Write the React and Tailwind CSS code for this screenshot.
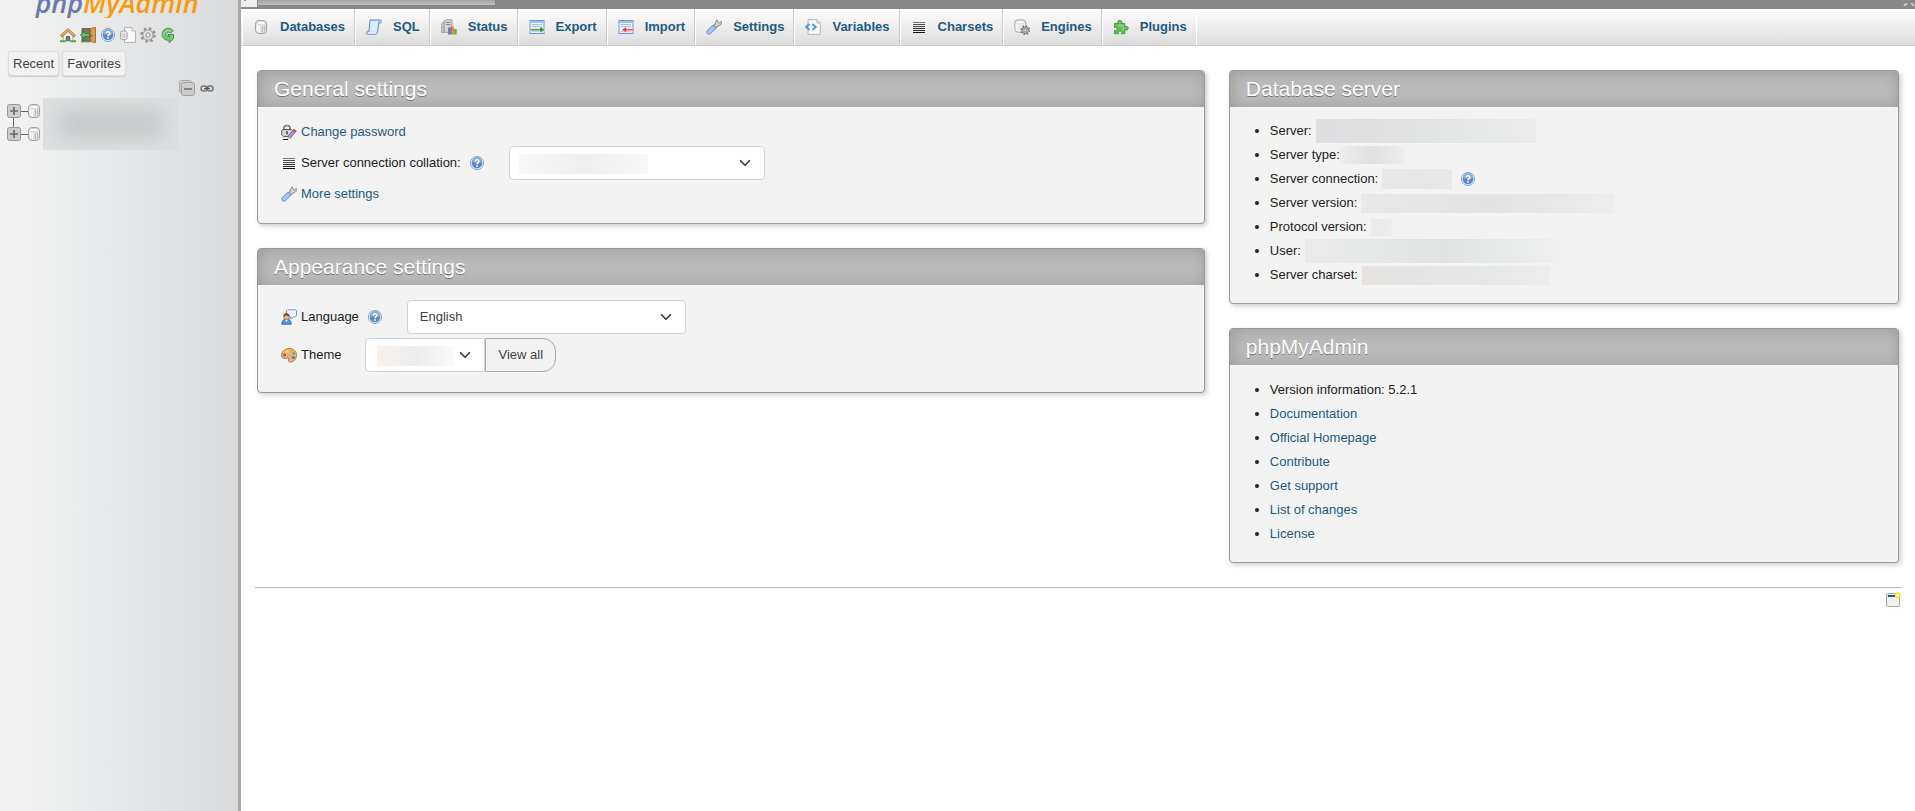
import React from "react";

function Svg({ children, className = "h-4 w-4", box = "0 0 16 16" }) {
  return (
    <svg viewBox={box} className={`${className} shrink-0`} fill="none" aria-hidden="true">
      {children}
    </svg>
  );
}

const HomeIcon = () => (
  <Svg>
    <path d="M3 8.500 8 4l5 4.500V14H3z" fill="#f4f4f2" stroke="#8b8b86" strokeWidth=".8" />
    <path d="M1 9.500 8 3l7 6.500" stroke="#a8692b" strokeWidth="2.800" strokeLinejoin="round" />
    <path d="M1.300 9.200 8 3l6.700 6.200" stroke="#e6b67c" strokeWidth="1.300" />
    <path d="M6.200 14V9.500h3.600V14" fill="#777" stroke="#555" strokeWidth=".8" />
    <path d="M0 14.300h5.500M10.500 14.300H16" stroke="#4cae3c" strokeWidth="2" />
  </Svg>
);

const ExitIcon = () => (
  <Svg>
    <path d="M2 1.500h8.500v13H2z" fill="#7a6a52" stroke="#6b5434" strokeWidth=".8" />
    <path d="M10.500 1.500 15.500.5v15l-5-1z" fill="#d79b55" stroke="#a8692b" strokeWidth=".9" />
    <path d="M11.800 8v1.500" stroke="#6b4318" />
    <path d="M3.500 3h6v10h-6z" fill="#777772" />
    <path d="M.3 8l4.500-3.800v2.300H9.500v3H4.800v2.300z" fill="#6fc063" stroke="#2e7d2c" strokeWidth=".8" />
    <path d="M1 14.800h9" stroke="#4cae3c" strokeWidth="1.200" />
  </Svg>
);

const HelpIcon = () => (
  <Svg>
    <circle cx="8" cy="8" r="6.600" fill="#e6eef8" stroke="#86a6cf" />
    <circle cx="8" cy="8" r="5.300" fill="#5c88c0" />
    <path d="M3 7a5 5 0 0 1 10 0c-3 1.200-7 1.200-10 0z" fill="#86a9d6" />
    <path d="M6.200 6.500c0-2.300 3.700-2.300 3.700-.1 0 1.300-1.900 1.300-1.900 2.800" stroke="#fff" strokeWidth="1.500" />
    <path d="M7.200 10.300h1.600v1.500H7.200z" fill="#fff" />
  </Svg>
);

const DatabaseIcon = () => (
  <Svg>
    <rect x="2.500" y="1.500" width="11" height="13" rx="3.500" fill="#e6e6e6" stroke="#a2a2a2" />
    <ellipse cx="8" cy="4" rx="4.300" ry="1.700" fill="#fff" stroke="#c4c4c4" strokeWidth=".6" />
    <path d="M4.500 6.500v6M6.500 7v6.500" stroke="#fff" strokeWidth="1.300" />
    <path d="M9.300 7v6.500M11.500 6.500v6" stroke="#bcbcbc" strokeWidth="1.300" />
  </Svg>
);

const DocsIcon = () => (
  <Svg>
    <path d="M4.500.6h7.500l3.400 3.400v11.400H4.500z" fill="#fbfbfb" stroke="#b0b0b0" />
    <path d="M12 .6V4h3.400" fill="#e5e5e5" stroke="#b0b0b0" strokeWidth=".8" />
    <rect x=".6" y="4" width="6.500" height="8.500" rx="2" fill="#ececec" stroke="#a2a2a2" />
    <path d="M3 6.500V11M4.800 6.500V11" stroke="#bdbdbd" />
  </Svg>
);

const GearIcon = () => (
  <Svg>
    <circle cx="8" cy="8" r="6.500" stroke="#979797" strokeWidth="2.600" strokeDasharray="2.550 2.550" />
    <circle cx="8" cy="8" r="5.300" fill="#cdcdcd" stroke="#979797" strokeWidth=".9" />
    <circle cx="8" cy="8" r="3.700" stroke="#e8e8e8" strokeWidth=".9" />
    <circle cx="8" cy="8" r="2" fill="#f3f3f3" stroke="#979797" />
  </Svg>
);

const ReloadIcon = () => (
  <Svg>
    <path
      d="M13 3.700A6 6 0 1 0 7.500 13.200h1.700V15.800L13.500 11.800V7.500H7.500L9.700 9.700C6.500 10.300 5.300 8.200 6 6.600 7 4.700 9.500 4.600 10.800 6z"
      fill="#7cc77c"
      stroke="#35893c"
      strokeWidth=".9"
      strokeLinejoin="round"
    />
    <path d="M3.200 8.500c-.3-4 4.300-6 7.800-4.200" stroke="#a9dea6" strokeWidth=".9" />
  </Svg>
);

const SqlIcon = () => (
  <Svg>
    <path d="M4 1h10.500c1.300 0 1.300 3 0 3H13l-1.500 8.500c-.2 1.800-1 2.700-2.200 2.700H1.500c-1.300 0-1.300-2.700 0-2.700H3z" fill="#cfe3fa" stroke="#5a8cc8" />
    <path d="M4.800 2.500h7.200L10.500 12.500H4z" fill="#dcebfd" />
    <path d="M2 14h7.500" stroke="#fff" />
    <path d="M13 1.500v2.500" stroke="#5a8cc8" strokeWidth=".8" />
  </Svg>
);

const StatusIcon = () => (
  <Svg>
    <path d="M3 2.500 5 .8h6v12.500H3z" fill="#d6d6d6" stroke="#999" strokeWidth=".9" />
    <path d="M.6 4.500 3 2.500v11H.6z" fill="#c6c6c6" stroke="#999" strokeWidth=".7" />
    <path d="M5 3.500h4.500M5 5.500h4.500" stroke="#8a8a8a" />
    <path d="M7 8.500h3V15.500H7z" fill="#4a8be0" />
    <path d="M10 7.500h3v8h-3z" fill="#f08b3e" />
    <path d="M9.800 7.500h1V15.500h-1z" fill="#e04a3c" />
    <path d="M13 10h2.700v5.500H13z" fill="#5cb84c" />
  </Svg>
);

const SheetIcon = ({ color, flip }) => (
  <Svg>
    <rect x="1" y="1.500" width="14" height="13" fill="#eef5fd" stroke="#6c97cf" />
    <path d="M2 3h12" stroke="#86aee0" strokeWidth="1.500" />
    <path d="M3 5.500h10M3 7.500h10M3 12.700h10" stroke="#9dbde4" />
    <path d="M5.500 5v8M10.500 5v8" stroke="#c9dcf2" strokeWidth=".7" />
    {flip ? (
      <path d="M16 9.800H8.500V7.500L3.500 10.800 8.500 14v-2.200H16z" fill={color} stroke="#fff" strokeWidth=".5" />
    ) : (
      <path d="M1 9.800h10V7.500l5 3.300-5 3.200v-2.200H1z" fill={color} stroke="#fff" strokeWidth=".5" />
    )}
  </Svg>
);

const WrenchIcon = () => (
  <Svg>
    <path d="M8 8.500 12 4.500" stroke="#8a8a8a" strokeWidth="4" />
    <path d="M11 .7 9.200 3.500l.5 2.700 2.600.9 2.900-1.800.2-3.100-1.700 1.600-1.800-.4-.3-1.600z" fill="#d3d3d3" stroke="#8a8a8a" strokeWidth=".9" />
    <path d="M8 8.500 11.500 5" stroke="#d3d3d3" strokeWidth="2.200" />
    <path d="M3 13 7.300 8.700" stroke="#6a8ccc" strokeWidth="5" strokeLinecap="round" />
    <path d="M3 13 7.300 8.700" stroke="#a9c6f3" strokeWidth="3.400" strokeLinecap="round" />
  </Svg>
);

const VariablesIcon = () => (
  <Svg>
    <path d="M3 .6h9l3.300 3.300v11.500H3z" fill="#f8f8f8" stroke="#b5b5b5" />
    <path d="M12 .6V4h3.300" fill="#e2e2e2" stroke="#b5b5b5" strokeWidth=".8" />
    <path d="M4.500 5 1.200 8l3.300 3M7.500 5l3.300 3-3.300 3" stroke="#4a9be8" strokeWidth="1.900" />
  </Svg>
);

const CharsetsIcon = () => (
  <Svg>
    <path d="M2 3.500h12" stroke="#777" />
    <path d="M2 5.500h12M2 7.500h12" stroke="#4a4a4a" />
    <path d="M2 9.500h12M2 11.500h12" stroke="#2a2a2a" />
    <path d="M2 13.500h12" stroke="#111" />
  </Svg>
);

const EnginesIcon = () => (
  <Svg>
    <rect x=".8" y=".8" width="11" height="12.500" rx="3.300" fill="#ececec" stroke="#aaa" />
    <ellipse cx="6.300" cy="3.300" rx="4.200" ry="1.600" fill="#fff" stroke="#c6c6c6" strokeWidth=".6" />
    <path d="M3 6v5.500" stroke="#fff" strokeWidth="1.300" />
    <circle cx="11.200" cy="11.200" r="4" stroke="#707070" strokeWidth="1.800" strokeDasharray="1.570 1.570" />
    <circle cx="11.200" cy="11.200" r="3.200" fill="#b9b9b9" stroke="#707070" strokeWidth=".8" />
    <circle cx="11.200" cy="11.200" r="1.200" fill="#fff" stroke="#707070" strokeWidth=".7" />
  </Svg>
);

const PluginsIcon = () => (
  <Svg>
    <path
      d="M1.500 4.500h3.800C4 2.500 5.200 1.200 6.800 1.200S9.500 2.500 8.300 4.500h3.500v3.300c2-1.200 3.400-.2 3.400 1.400s-1.400 2.500-3.400 1.300v4.300H8.500c.9-2-.2-2.800-1.500-2.800s-2.400.8-1.500 2.800h-4v-3.500c1.700.9 2.600 0 2.600-1.300S3.200 7.500 1.500 8.500z"
      fill="#6cbd5f"
      stroke="#3f9440"
      strokeWidth=".9"
    />
    <path d="M5 6.500h5v5" stroke="#93d488" strokeWidth="1.300" />
  </Svg>
);

const PasswordIcon = () => (
  <Svg>
    <path d="M3 5.500V4.500c0-4 6-4 6 0v1" stroke="#5b5b66" strokeWidth="1.700" />
    <path d="M3.200 4.800c0-4 5.700-4 5.700 0" stroke="#c9c9d6" strokeWidth=".7" />
    <path d="M1.800 5.500h8.500l1 1v4.500l-1.500 1.500h-7.500L.7 11V6.500z" fill="#c3c3d0" stroke="#5d5d69" />
    <path d="M1 7.800h10M1 10h10" stroke="#efeff6" strokeWidth=".9" />
    <path d="M5.300 7.300h1.400v3H5.300z" fill="#333" />
    <path d="M8 13.500 13 7.500" stroke="#4a4590" strokeWidth="3.400" />
    <path d="M8 13.500 13 7.500" stroke="#a3a0ea" strokeWidth="2" />
    <path d="M13 7.500l1.300-1.600" stroke="#e0402c" strokeWidth="3.600" />
    <path d="M6.300 15.500l.3-3 2.500 1.800z" fill="#e9b93c" />
    <path d="M2 15.500h5" stroke="#111" />
  </Svg>
);

const LanguageIcon = () => (
  <Svg>
    <path d="M6.500.8h8l1 1v5l-1 1h-2L9.500 10V7.800h-3l-1-1v-5z" fill="#eef5ff" stroke="#6d9bd6" />
    <path d="M.8 15.300c0-4 1.700-5 4.700-5s4.700 1 4.700 5z" fill="#4d95e6" stroke="#2c68b4" strokeWidth=".8" />
    <path d="M3.800 10.500 5.500 13l1.700-2.500z" fill="#fff" />
    <circle cx="5.500" cy="7.500" r="2.900" fill="#f0bd8d" stroke="#9a5a2b" strokeWidth=".7" />
    <path d="M2.500 7.500c-.3-4 6-4.300 6-.3-2 0-3-.3-3.600-1C4.500 7 3.500 7.500 2.500 7.500z" fill="#8a4b20" />
  </Svg>
);

const ThemeIcon = () => (
  <Svg>
    <path
      d="M8.500 1.500c4 0 7 2.700 7 6.500s-2.500 7-6 7c-2 0-2.200-1-2-2.200.2-1.400-.4-2-1.700-1.600C3 12.200.5 11.300.5 8.500c0-4 3.800-7 8-7z"
      fill="#ecb57e"
      stroke="#b06f35"
      strokeWidth=".9"
    />
    <circle cx="3.600" cy="8" r="1.500" fill="#e23b31" />
    <circle cx="6" cy="4.500" r="1.400" fill="#f0e04a" />
    <circle cx="10" cy="4" r="1.400" fill="#f7a63a" />
    <circle cx="12.800" cy="6.600" r="1.400" fill="#57b947" />
    <circle cx="12.300" cy="10.500" r="1.500" fill="#3d7bdc" />
    <circle cx="8.200" cy="9.500" r="1.200" fill="#f3f3f3" stroke="#9a6a3a" strokeWidth=".6" />
  </Svg>
);

const CollapseIcon = () => (
  <Svg>
    <rect x=".5" y=".5" width="12" height="12" rx="2" fill="#d0d0d0" stroke="#a8a8a8" />
    <rect x="2.500" y="2.500" width="13" height="13" rx="2" fill="#cdcdcd" stroke="#a0a0a0" />
    <path d="M5 9h8" stroke="#6a6a6a" strokeWidth="1.500" />
  </Svg>
);

const LinkIcon = () => (
  <Svg>
    <rect x="2" y="6" width="6" height="5" rx="2.500" stroke="#777" strokeWidth="1.500" />
    <rect x="8" y="6" width="6" height="5" rx="2.500" stroke="#777" strokeWidth="1.500" />
    <path d="M5 8.500h6" stroke="#555" strokeWidth="1.500" />
  </Svg>
);

const ExpandIcon = () => (
  <Svg className="h-[14px] w-[14px]" box="0 0 14 14">
    <rect x=".5" y=".5" width="13" height="13" rx="2" fill="#cdcdcd" stroke="#999" />
    <path d="M3 7h8M7 3v8" stroke="#6a6a6a" strokeWidth="1.600" />
  </Svg>
);

const WindowIcon = () => (
  <Svg>
    <rect x="1.500" y="1.500" width="13" height="13" rx="1" fill="#ededed" stroke="#aaaaa2" />
    <path d="M3 6h10v7H3z" fill="#f1f1f1" />
    <path d="M3 4h8" stroke="#23539c" strokeWidth="2" />
    <circle cx="12.800" cy="3.300" r="2.200" fill="#fffde0" stroke="#f2e92b" strokeWidth="1.500" />
  </Svg>
);

const Chevron = () => (
  <Svg className="pointer-events-none absolute right-[14px] top-[11px] h-3 w-3" box="0 0 16 16">
    <path d="M2 5l6 6 6-6" stroke="#343a40" strokeWidth="2.200" strokeLinecap="round" strokeLinejoin="round" />
  </Svg>
);

const tabs = [
  ["Databases", <DatabaseIcon />],
  ["SQL", <SqlIcon />],
  ["Status", <StatusIcon />],
  ["Export", <SheetIcon color="#3a8f35" />],
  ["Import", <SheetIcon color="#e8443c" flip />],
  ["Settings", <WrenchIcon />],
  ["Variables", <VariablesIcon />],
  ["Charsets", <CharsetsIcon />],
  ["Engines", <EnginesIcon />],
  ["Plugins", <PluginsIcon />],
];

const shortcuts = [
  ["Home", <HomeIcon />],
  ["Log out", <ExitIcon />],
  ["phpMyAdmin documentation", <HelpIcon />],
  ["Server documentation", <DocsIcon />],
  ["Navigation panel settings", <GearIcon />],
  ["Reload navigation panel", <ReloadIcon />],
];

const serverInfo = [
  ["Server:", "ml-1 h-6 w-[220px] from-[#dfdddf] via-[#e2e3e3] to-[#ececec]"],
  ["Server type:", "h-[18px] w-[65px] from-[#efefef] via-[#e0e0e0] to-[#efefef]"],
  ["Server connection:", "ml-1 h-5 w-[70px] from-[#e8e8e7] via-[#e5e6e6] to-[#e8eaea]"],
  ["Server version:", "ml-1 h-[19px] w-[254px] from-[#e9e9e9] via-[#e2e2e2] to-[#eeeeee]"],
  ["Protocol version:", "ml-1 h-[17px] w-[21px] from-[#ebebea] via-[#ebebeb] to-[#eeeeee]"],
  ["User:", "ml-1 h-6 w-[284px] from-[#ebebeb] via-[#e1e2e2] to-[#f3f3f3]"],
  ["Server charset:", "ml-1 h-[19px] w-[188px] from-[#e6e3e0] via-[#e4e5e5] to-[#ededed]"],
];

const projectLinks = ["Documentation", "Official Homepage", "Contribute", "Get support", "List of changes", "License"];

function Card({ title, children }) {
  return (
    <section className="overflow-hidden rounded-[4px] border border-[#999] bg-[#f3f3f3] shadow-[2px_2px_5px_#ccc]">
      <h2 className="h-9 bg-[#bbb] px-4 text-[21px] leading-9 text-white shadow-[inset_1px_1px_15px_#999] [text-shadow:0_1px_0_#777]">
        {title}
      </h2>
      {children}
    </section>
  );
}

const link = "text-[#235a81] hover:underline";
const selectBox = "w-full h-[34px] appearance-none rounded-[4px] border border-[#ced4da] bg-white pl-3 pr-9 text-[13px] text-[#444]";

export default function App() {
  return (
    <div className="flex min-h-screen bg-white font-['Liberation_Sans',Arial,sans-serif] text-[13px] leading-5 text-[#222]">
      <aside className="w-[241px] shrink-0 border-r-[3px] border-[#aaa] bg-linear-to-r from-[#f3f3f3] to-[#d9dbdd]">
        <a href="#home" className="flex h-[18px] items-end justify-center overflow-hidden pr-1 font-['Open_Sans','Noto_Sans',sans-serif] text-[27px] font-semibold italic leading-[30px]">
          <span className="text-[#6c78af]">php</span>
          <span className="text-[#f89c0e]">MyAdmin</span>
        </a>
        <nav className="mt-[9px] flex justify-center gap-1 pr-[3px]">
          {shortcuts.map(([name, icon]) => (
            <a key={name} href="#home" aria-label={name}>{icon}</a>
          ))}
        </nav>
        <div className="mt-2 flex gap-[3px] pl-2">
          {["Recent", "Favorites"].map((name) => (
            <button key={name} type="button" className="h-[25px] rounded-[3px] border border-[#ddd] bg-[#f2f2f2] px-1 text-[13px] text-[#444] shadow-[0_1px_1px_#ccc]">
              {name}
            </button>
          ))}
        </div>
        <div className="mt-1 flex justify-end gap-1 pr-[23px]">
          <a href="#collapse" aria-label="Collapse all"><CollapseIcon /></a>
          <a href="#link" aria-label="Unlink from main panel"><LinkIcon /></a>
        </div>
        <div className="mt-[2px] flex pl-[7px]">
          <div className="flex flex-col pt-[6px]">
            {[0, 1].map((row) => (
              <div key={row} className="flex flex-col">
                {row > 0 && <span className="ml-[6px] h-[9px] w-px bg-[#666]" />}
                <div className="flex items-center">
                  <button type="button" aria-label="Expand"><ExpandIcon /></button>
                  <span className="h-px w-[7px] bg-[#666]" />
                  <div className="-my-px -ml-[2px]"><DatabaseIcon /></div>
                </div>
              </div>
            ))}
          </div>
          <div className="ml-px h-[52px] w-[136px] overflow-hidden bg-[#dddfe0] px-4 py-3">
            <div className="h-full bg-[#c6c8c9] blur-[10px]" />
          </div>
        </div>
      </aside>

      <div className="flex min-w-0 grow flex-col">
        <div className="flex h-[9px] items-start overflow-hidden bg-[#888]">
          <div className="h-[7px] w-4 bg-[#eee]">
            <Svg className="h-[2px] w-2" box="0 0 8 2"><path d="M3 0h2v1H3z" fill="#d77" /></Svg>
          </div>
          <div className="ml-px h-[5px] w-[237px] bg-linear-to-b from-[#a5a5a5] to-[#bdbdbd]" />
          <button type="button" aria-label="Close" className="ml-auto h-[9px] w-3">
            <Svg className="h-[3px] w-3" box="0 0 12 3"><path d="M1 3l3-3M11 3 8 0" stroke="#ccc" strokeWidth="2" /></Svg>
          </button>
        </div>
        <nav className="flex h-[37px] border-b border-[#ccc] bg-linear-to-b from-white to-[#dcdcdc] pl-px">
          {tabs.map(([name, icon]) => (
            <a key={name} href="#tab" className="flex items-center gap-[11px] border-l border-r border-l-white border-r-[#ccc] pl-[10px] pr-[9px] font-bold text-[#235a81] last:border-r-white">
              {icon}
              {name}
            </a>
          ))}
        </nav>

        <main className="grid grid-cols-12 items-start gap-6 pl-4 pr-4 pt-6">
          <div className="col-span-7 flex flex-col gap-6">
            <Card title="General settings">
              <ul className="flex flex-col gap-1 pb-[19px] pl-[23px] pr-6 pt-[15px]">
                <li className="flex items-center gap-1"><PasswordIcon /><a href="#password" className={link}>Change password</a></li>
                <li className="flex items-center">
                  <CharsetsIcon />
                  <label htmlFor="collation" className="ml-1 mr-2">Server connection collation:</label>
                  <HelpIcon />
                  <div className="relative ml-6 w-[256px]">
                    <select id="collation" className={selectBox}><option></option></select>
                    <div className="pointer-events-none absolute left-[10px] top-2 h-5 w-[129px] bg-linear-to-r from-[#f8f8f8] via-[#eeeeee] to-[#f8f8f8]" />
                    <Chevron />
                  </div>
                </li>
                <li className="flex items-center gap-1"><WrenchIcon /><a href="#settings" className={link}>More settings</a></li>
              </ul>
            </Card>

            <Card title="Appearance settings">
              <ul className="flex flex-col gap-1 pb-5 pl-[23px] pr-6 pt-[15px]">
                <li className="flex items-center">
                  <LanguageIcon />
                  <label htmlFor="language" className="ml-1 mr-2">Language</label>
                  <HelpIcon />
                  <div className="relative ml-6 w-[279px]">
                    <select id="language" className={selectBox}><option>English</option></select>
                    <Chevron />
                  </div>
                </li>
                <li className="flex items-center">
                  <ThemeIcon />
                  <label htmlFor="theme" className="ml-1">Theme</label>
                  <div className="relative ml-6 w-[120px]">
                    <select id="theme" className={`${selectBox} rounded-r-none`}><option></option></select>
                    <div className="pointer-events-none absolute left-3 top-2 h-5 w-[77px] bg-linear-to-r from-[#f8f1ea] via-[#ededed] to-[#fafafa]" />
                    <Chevron />
                  </div>
                  <button type="button" className="h-[34px] rounded-r-[13px] border border-[#aaa] bg-[#f3f3f3] px-3 text-[13px] text-[#444]">View all</button>
                </li>
              </ul>
            </Card>
          </div>

          <div className="col-span-5 flex flex-col gap-6">
            <Card title="Database server">
              <ul className="list-disc pb-4 pl-10 pt-3">
                {serverInfo.map(([name, blur]) => (
                  <li key={name}>
                    <div className="flex h-6 items-center">
                      {name}
                      <span className={`${blur} bg-linear-to-r`} />
                      {name === "Server connection:" && <span className="ml-2"><HelpIcon /></span>}
                    </div>
                  </li>
                ))}
              </ul>
            </Card>

            <Card title="phpMyAdmin">
              <ul className="list-disc pb-4 pl-10 pt-[13px] leading-6">
                <li>Version information: 5.2.1</li>
                {projectLinks.map((name) => (
                  <li key={name}><a href="#project" className={link}>{name}</a></li>
                ))}
              </ul>
            </Card>
          </div>
        </main>

        <footer className="mx-[14px] mt-6 flex justify-end border-t border-[#bbb] pt-1">
          <a href="#window" aria-label="Open new phpMyAdmin window"><WindowIcon /></a>
        </footer>
      </div>
    </div>
  );
}
